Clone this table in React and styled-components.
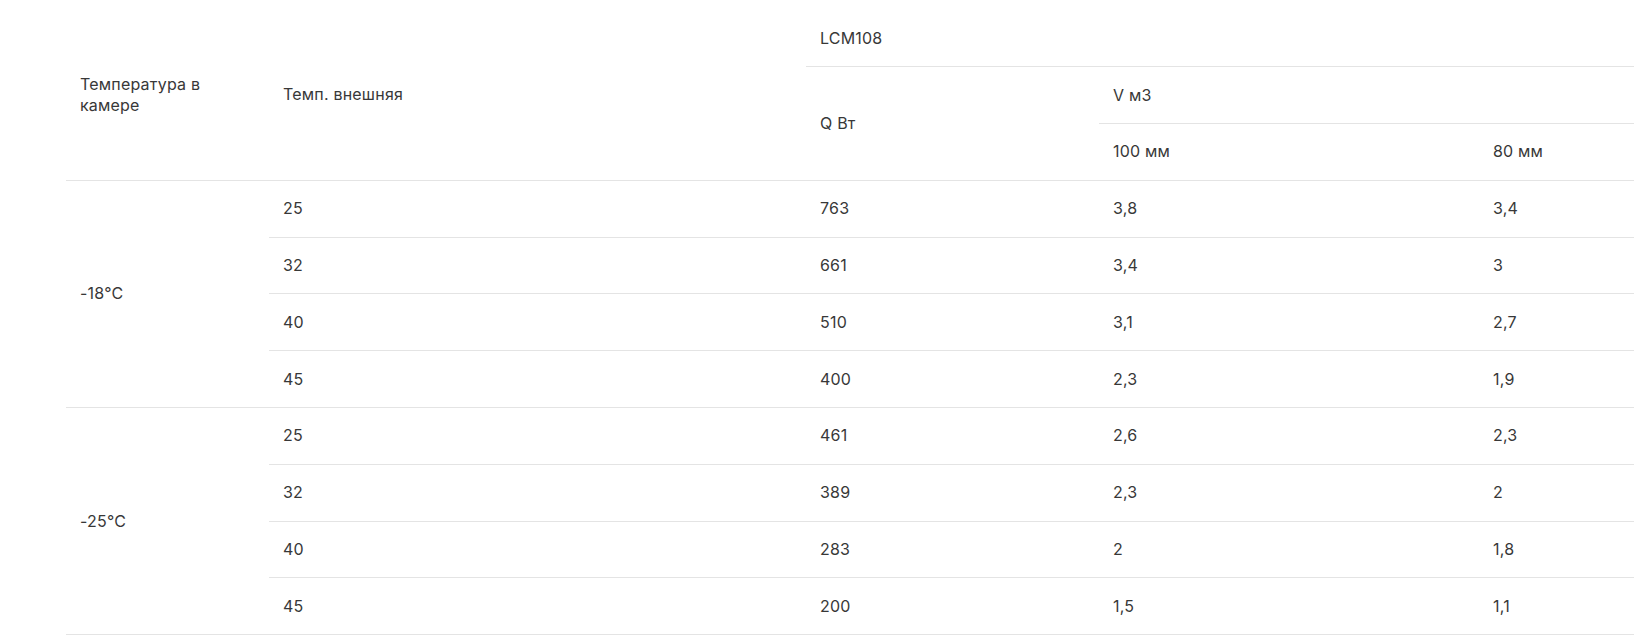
import React from "react";
import styled, { createGlobalStyle } from "styled-components";

const GlobalStyle = createGlobalStyle`
  html, body {
    margin: 0;
    padding: 0;
    background: #fff;
  }
  body {
    font-family: Inter, "Open Sans", "Liberation Sans", sans-serif;
    color: #333;
    overflow: hidden;
  }
`;

const rows = [
  {
    temp: "-18°C",
    items: [
      ["25", "763", "3,8", "3,4"],
      ["32", "661", "3,4", "3"],
      ["40", "510", "3,1", "2,7"],
      ["45", "400", "2,3", "1,9"],
    ],
  },
  {
    temp: "-25°C",
    items: [
      ["25", "461", "2,6", "2,3"],
      ["32", "389", "2,3", "2"],
      ["40", "283", "2", "1,8"],
      ["45", "200", "1,5", "1,1"],
    ],
  },
];

function App() {
  return (
    <>
      <GlobalStyle />
      <Page>
        <Table>
          <colgroup>
            <col style={{ width: 203 }} />
            <col style={{ width: 537 }} />
            <col style={{ width: 293 }} />
            <col style={{ width: 380 }} />
            <col style={{ width: 155 }} />
          </colgroup>
          <thead>
            <Row>
              <Head rowSpan={3} narrow>
                Температура в камере
              </Head>
              <Head rowSpan={3}>Темп. внешняя</Head>
              <Head colSpan={3}>LCM108</Head>
            </Row>
            <Row>
              <Head rowSpan={2}>Q Вт</Head>
              <Head colSpan={2}>V м3</Head>
            </Row>
            <Row>
              <Head>100 мм</Head>
              <Head>80 мм</Head>
            </Row>
          </thead>
          <tbody>
            {rows.map((group) =>
              group.items.map((item, i) => (
                <Row key={group.temp + item[0]}>
                  {i === 0 && <Cell rowSpan={group.items.length}>{group.temp}</Cell>}
                  {item.map((v, j) => (
                    <Cell key={j}>{v}</Cell>
                  ))}
                </Row>
              ))
            )}
          </tbody>
        </Table>
      </Page>
    </>
  );
}

const Page = styled.div`
  padding: 10px 0 0 66px;
`;

const Table = styled.table`
  width: 1568px;
  table-layout: fixed;
  border-collapse: collapse;
  border-spacing: 0;
  font-size: 16px;
  letter-spacing: 0.2px;
  line-height: 21px;
`;

const Row = styled.tr`
  height: 56.8px;
`;

const Head = styled.th`
  padding: 0 ${(p) => (p.narrow ? "50px" : "14px")} 0 14px;
  text-align: left;
  vertical-align: middle;
  font-weight: 400;
  color: #383838;
  border-bottom: 1px solid #e4e4e4;
`;

const Cell = styled.td`
  padding: 0 14px;
  text-align: left;
  vertical-align: middle;
  color: #383838;
  border-bottom: 1px solid #e4e4e4;
`;

export default App;
